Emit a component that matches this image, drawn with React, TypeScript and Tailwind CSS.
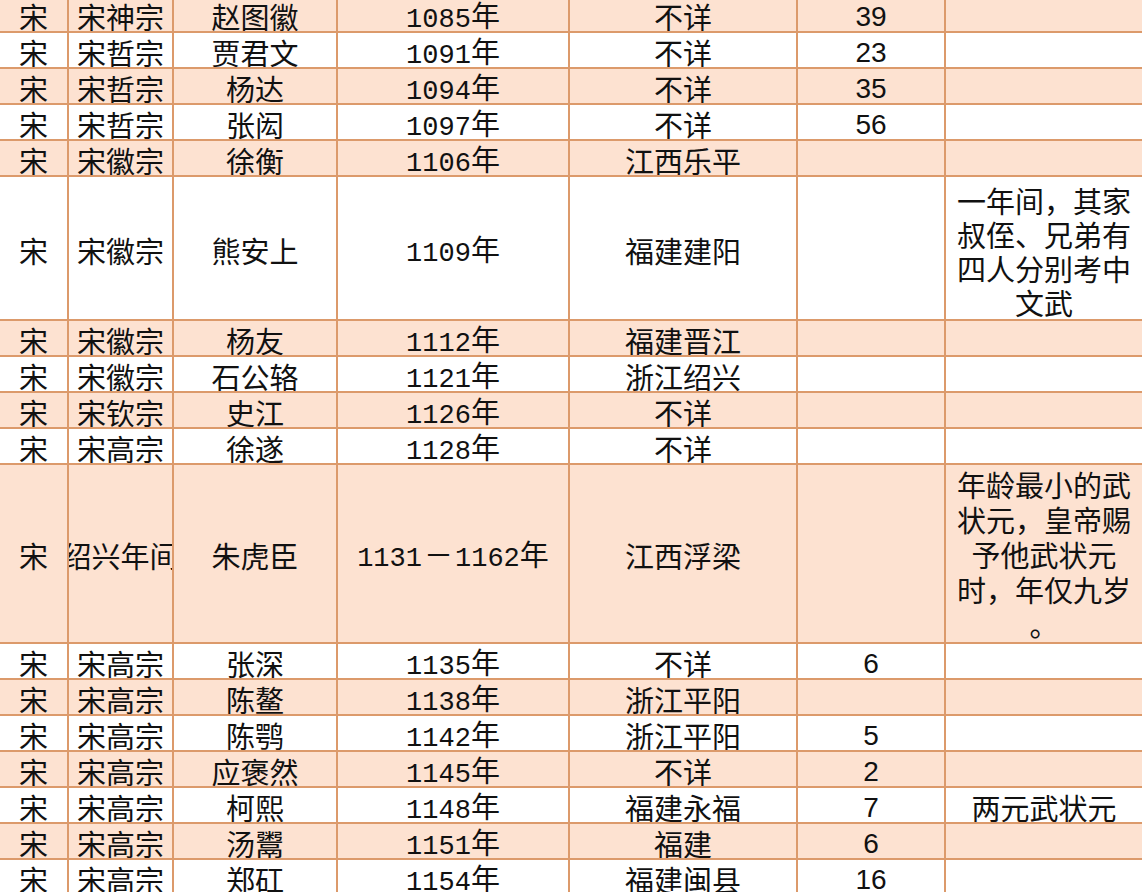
import React from "react";

type Row = {
  a: string;
  b: string;
  c: string;
  y: string;
  place: string;
  n: string;
  note?: string[];
  h?: string;
  peach: boolean;
};

const rows: Row[] = [
  { a: "宋", b: "宋神宗", c: "赵图徽", y: "1085", place: "不详", n: "39", peach: true },
  { a: "宋", b: "宋哲宗", c: "贾君文", y: "1091", place: "不详", n: "23", peach: false },
  { a: "宋", b: "宋哲宗", c: "杨达", y: "1094", place: "不详", n: "35", peach: true },
  { a: "宋", b: "宋哲宗", c: "张闳", y: "1097", place: "不详", n: "56", peach: false },
  { a: "宋", b: "宋徽宗", c: "徐衡", y: "1106", place: "江西乐平", n: "", peach: true },
  {
    a: "宋",
    b: "宋徽宗",
    c: "熊安上",
    y: "1109",
    place: "福建建阳",
    n: "",
    note: ["一年间，其家", "叔侄、兄弟有", "四人分别考中", "文武"],
    h: "tall1",
    peach: false,
  },
  { a: "宋", b: "宋徽宗", c: "杨友", y: "1112", place: "福建晋江", n: "", peach: true },
  { a: "宋", b: "宋徽宗", c: "石公辂", y: "1121", place: "浙江绍兴", n: "", peach: false },
  { a: "宋", b: "宋钦宗", c: "史江", y: "1126", place: "不详", n: "", peach: true },
  { a: "宋", b: "宋高宗", c: "徐遂", y: "1128", place: "不详", n: "", peach: false },
  {
    a: "宋",
    b: "绍兴年间",
    c: "朱虎臣",
    y: "1131－1162",
    place: "江西浮梁",
    n: "",
    note: ["年龄最小的武", "状元，皇帝赐", "予他武状元", "时，年仅九岁", "。"],
    h: "tall2",
    peach: true,
  },
  { a: "宋", b: "宋高宗", c: "张深", y: "1135", place: "不详", n: "6", peach: false },
  { a: "宋", b: "宋高宗", c: "陈鳌", y: "1138", place: "浙江平阳", n: "", peach: true },
  { a: "宋", b: "宋高宗", c: "陈鹗", y: "1142", place: "浙江平阳", n: "5", peach: false },
  { a: "宋", b: "宋高宗", c: "应褒然", y: "1145", place: "不详", n: "2", peach: true },
  { a: "宋", b: "宋高宗", c: "柯熙", y: "1148", place: "福建永福", n: "7", note: ["两元武状元"], peach: false },
  { a: "宋", b: "宋高宗", c: "汤鬻", y: "1151", place: "福建", n: "6", peach: true },
  { a: "宋", b: "宋高宗", c: "郑矼", y: "1154", place: "福建闽县", n: "16", peach: false },
];

const cell =
  "flex items-center justify-center overflow-hidden whitespace-nowrap border-r-2 border-[#dc9a6b] shrink-0 pt-[5px]";

function Year({ y }: { y: string }) {
  if (y.includes("－")) {
    const [s, e] = y.split("－");
    return (
      <span>
        <span className="font-['Liberation_Mono'] text-[27px]">{s}</span>
        <span className="mx-[2px]">－</span>
        <span className="font-['Liberation_Mono'] text-[27px]">{e}</span>年
      </span>
    );
  }
  return (
    <span>
      <span className="font-['Liberation_Mono'] text-[27px]">{y}</span>年
    </span>
  );
}

export default function App() {
  return (
    <div className="w-[1142px] h-[892px] overflow-hidden bg-white">
      <div className="-mt-[3px] flex flex-col text-[29px] text-[#111] font-['Noto_Sans_CJK_SC',sans-serif]">
        {rows.map((r, i) => {
          const h =
            r.h === "tall1" ? "h-[144px]" : r.h === "tall2" ? "h-[179px]" : "h-[36px]";
          const lead = r.h === "tall2" ? "leading-[35px]" : "leading-[34px]";
          const multi = !!r.note && r.note.length > 1;
          const pad = r.h === "tall2" ? "pt-[2px]" : "pt-[6px]";
          return (
            <div
              key={i}
              className={`flex ${h} border-b-2 border-[#dc9a6b] ${r.peach ? "bg-[#fde2d1]" : "bg-white"}`}
            >
              <div className={`${cell} w-[69px]`}>{r.a}</div>
              <div className={`${cell} w-[105px]`}>{r.b}</div>
              <div className={`${cell} w-[164px]`}>{r.c}</div>
              <div className={`${cell} w-[232px]`}>
                <Year y={r.y} />
              </div>
              <div className={`${cell} w-[228px]`}>{r.place}</div>
              <div className={`${cell} w-[148px] font-['Liberation_Sans'] text-[28px]`}>{r.n}</div>
              <div
                className={`flex flex-1 flex-col items-center justify-center overflow-hidden text-center ${
                  multi ? pad : "pt-[5px]"
                }`}
              >
                {r.note &&
                  r.note.map((t, k) => (
                    <div key={k} className={`${multi ? lead : ""} whitespace-nowrap`}>
                      {t}
                    </div>
                  ))}
              </div>
            </div>
          );
        })}
      </div>
    </div>
  );
}
